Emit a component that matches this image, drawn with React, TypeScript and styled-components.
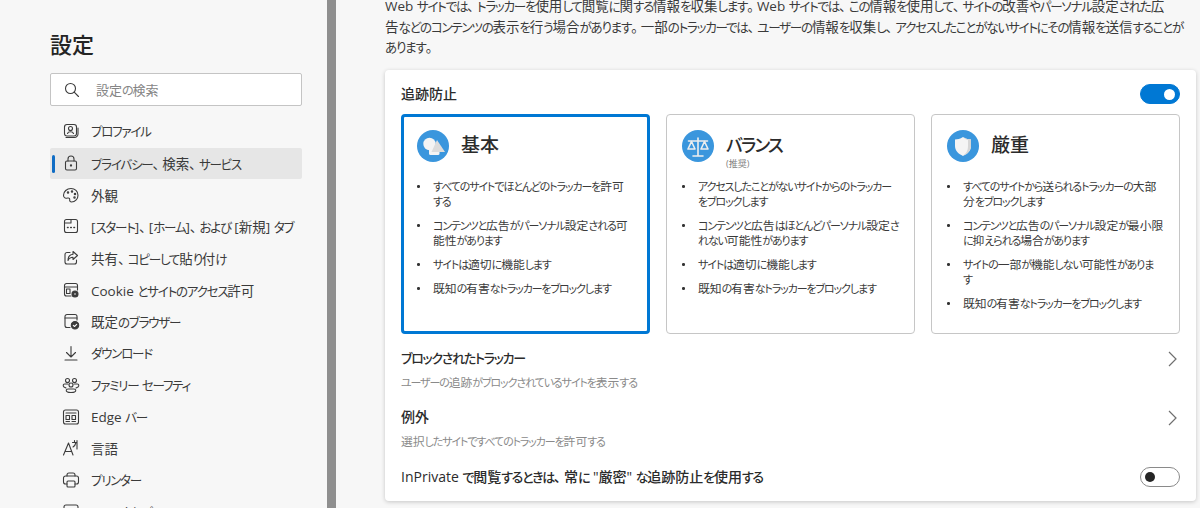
import React from "react";
import styled, { createGlobalStyle } from "styled-components";

const Global = createGlobalStyle`
  html, body { margin: 0; padding: 0; background: #f7f7f7; }
  body {
    font-family: "Open Sans", "Noto Sans CJK JP", sans-serif;
    font-feature-settings: "palt";
    color: #2b2b2b;
  }
`;

const Kana = styled.span`
  font-size: 0.93em;
  letter-spacing: -0.1em;
  line-height: 1;
`;
const Punct = styled.span`
  padding-right: 0.22em;
  line-height: 1;
`;

function T({ children }: { children: string }) {
  const parts = children.split(/([ぁ-んァ-ヶー]+|[、。])/);
  return (
    <>
      {parts.map((p, i) =>
        i % 2 === 0 ? (
          p
        ) : /[、。]/.test(p) ? (
          <Punct key={i}>{p}</Punct>
        ) : (
          <Kana key={i}>{p}</Kana>
        )
      )}
    </>
  );
}

const Page = styled.div`
  display: flex;
  width: 1200px;
  height: 508px;
  overflow: hidden;
  background: #f7f7f7;
`;
const Sidebar = styled.aside`
  width: 327px;
  flex: none;
  box-sizing: border-box;
  padding: 30px 25px 0 50px;
`;
const Title = styled.h1`
  margin: 0 0 14px;
  font-size: 22px;
  line-height: 29px;
  font-weight: 500;
  color: #242424;
`;
const Search = styled.div`
  display: flex;
  align-items: center;
  height: 33px;
  box-sizing: border-box;
  background: #fff;
  border: 1px solid #c4c4c4;
  border-radius: 2px;
  padding-left: 12px;
  gap: 15px;
  margin-bottom: 10px;
`;
const Placeholder = styled.span`
  font-size: 13px;
  color: #858585;
`;
const NavList = styled.nav`
  display: flex;
  flex-direction: column;
`;
const NavItem = styled.div<{ $active?: boolean }>`
  position: relative;
  display: flex;
  align-items: center;
  height: 31.7px;
  flex: none;
  box-sizing: border-box;
  gap: 11px;
  padding: 0 0 1px 12px;
  border-radius: 2px;
  font-size: 13.5px;
  color: #3a3a3a;
  white-space: pre;
  background: ${(p) => (p.$active ? "#e6e6e6" : "transparent")};
  ${(p) =>
    p.$active &&
    `&::before { content: ""; position: absolute; left: 2px; top: 7px; width: 3px; height: 18px; border-radius: 2px; background: #0f6cc4; }`}
`;
const NavLabel = styled.span``;
const NavIcon = styled.svg`
  width: 18px;
  height: 18px;
  flex: none;
  fill: none;
  stroke: #3c3c3c;
  stroke-width: 1.1;
  stroke-linecap: round;
  stroke-linejoin: round;
`;
const Scrollbar = styled.div`
  width: 9px;
  flex: none;
  background: #8f8f8f;
`;
const Main = styled.main`
  flex: 1;
  min-width: 0;
  padding-left: 49px;
  padding-right: 4px;
`;
const Intro = styled.p`
  margin: -4px 0 12.5px;
  font-size: 13.5px;
  line-height: 20.5px;
  color: #3a3a3a;
  white-space: nowrap;
`;
const Panel = styled.section`
  background: #fff;
  border-radius: 4px;
  box-shadow: 0 1px 4px rgba(0, 0, 0, 0.2);
  padding: 14px 16px 0;
  height: 431px;
  box-sizing: border-box;
`;
const HeaderRow = styled.div`
  display: flex;
  align-items: center;
  justify-content: space-between;
  height: 20px;
  margin-bottom: 10px;
`;
const RowLabel = styled.span`
  font-size: 14px;
  font-weight: 500;
  color: #2b2b2b;
  padding-bottom: 2px;
`;
const Toggle = styled.div<{ $on?: boolean }>`
  display: flex;
  align-items: center;
  justify-content: ${(p) => (p.$on ? "flex-end" : "flex-start")};
  width: 40px;
  height: 20px;
  box-sizing: border-box;
  border-radius: 10px;
  padding: 0 4px;
  background: ${(p) => (p.$on ? "#0078d4" : "#fff")};
  border: 1px solid ${(p) => (p.$on ? "#0078d4" : "#8a8a8a")};
  &::after {
    content: "";
    width: ${(p) => (p.$on ? "11px" : "10px")};
    height: ${(p) => (p.$on ? "11px" : "10px")};
    border-radius: 50%;
    background: ${(p) => (p.$on ? "#fff" : "#252525")};
  }
`;
const Cards = styled.div`
  display: grid;
  grid-template-columns: repeat(3, 249px);
  gap: 16px;
  margin-bottom: 15px;
`;
const Card = styled.article<{ $selected?: boolean }>`
  height: 220px;
  box-sizing: border-box;
  border-radius: 4px;
  background: #fff;
  border: ${(p) => (p.$selected ? "3px solid #0078d4" : "1px solid #c6c6c6")};
  padding: ${(p) => (p.$selected ? "13px" : "15px")};
`;
const CardHead = styled.div`
  display: flex;
  gap: 12px;
  height: 44px;
  margin-bottom: 5px;
`;
const CardIcon = styled.svg`
  width: 32px;
  height: 32px;
  flex: none;
`;
const CardTitleBox = styled.div`
  display: flex;
  flex-direction: column;
  justify-content: flex-start;
`;
const CardTitle = styled.div`
  font-size: 19px;
  line-height: 30px;
  font-weight: 500;
  color: #2b2b2b;
`;
const CardNote = styled.div`
  font-size: 9px;
  line-height: 10px;
  color: #808080;
  margin-top: -1px;
`;
const Bullets = styled.ul`
  list-style: none;
  margin: 0;
  padding: 0;
  display: flex;
  flex-direction: column;
  gap: 9px;
`;
const Bullet = styled.li`
  position: relative;
  padding-left: 16px;
  font-size: 11.8px;
  line-height: 15px;
  color: #3a3a3a;
  white-space: nowrap;
  &::before {
    content: "";
    position: absolute;
    left: 0;
    top: 6px;
    width: 2.5px;
    height: 2.5px;
    border-radius: 50%;
    background: #333;
  }
`;
const LinkRow = styled.div`
  display: flex;
  align-items: flex-start;
  justify-content: space-between;
  height: 59px;
`;
const LinkText = styled.div`
  display: flex;
  flex-direction: column;
  gap: 6px;
`;
const LinkTitle = styled.div`
  font-size: 14px;
  line-height: 18px;
  font-weight: 500;
  color: #2b2b2b;
`;
const LinkSub = styled.div`
  font-size: 11.8px;
  line-height: 18px;
  color: #8a8a8a;
`;
const Chevron = styled.svg`
  width: 16px;
  height: 16px;
  flex: none;
  margin-top: 2px;
  fill: none;
  stroke: #6f6f6f;
  stroke-width: 1.2;
`;
const ToggleRow = styled.div`
  display: flex;
  align-items: center;
  justify-content: space-between;
  height: 20px;
`;

const navItems: { label: string; icon: React.ReactNode; active?: boolean }[] = [
  { label: "プロファイル", icon: <><rect x="2.5" y="2.5" width="12" height="11.5" rx="2.5" /><path d="M4 15.5h8.500a3.500 3.500 0 0 0 3.500-3.500V6" /><path d="M5.500 11.500c.4-1.200 1.500-1.800 3-1.800s2.600.6 3 1.800" /><circle cx="8.500" cy="6.500" r="2" /></> },
  { label: "プライバシー、検索、サービス", active: true, icon: <><rect x="3.500" y="7" width="11" height="9" rx="1.500" /><path d="M6 7V5a3 3 0 0 1 6 0v2" /><circle cx="9" cy="11.500" r=".6" /></> },
  { label: "外観", icon: <><path d="M9 2.500C4.800 2.500 1.500 5.500 1.500 9.300c0 3.500 2.800 3 4.200 2.700 1.500-.3 2.300.6 2 2-.2 1.300.6 2 1.800 2 3.800 0 6.500-3.200 6.500-6.800 0-3.800-3-6.700-7-6.700z" /><circle cx="6" cy="6.500" r=".7" /><circle cx="10" cy="5.500" r=".7" /><circle cx="13" cy="8" r=".7" /><circle cx="12.500" cy="11.500" r=".7" /></> },
  { label: "[スタート]、[ホーム]、および [新規] タブ", icon: <><rect x="2.500" y="2.500" width="13" height="13" rx="2" /><path d="M2.500 6H9V2.500" /><path d="M5.500 10.500h.6M8.700 10.500h.6M11.900 10.500h.6" strokeWidth="1.500" /></> },
  { label: "共有、コピーして貼り付け", icon: <><path d="M8 3.500H5a2 2 0 0 0-2 2V13a2 2 0 0 0 2 2h7.500a2 2 0 0 0 2-2v-2" /><path d="M11 2.500l4.500 4-4.500 4V8.300C8.500 8.300 7 9.300 6 11.500c0-3.500 1.800-6 5-6.300z" /></> },
  { label: "Cookie とサイトのアクセス許可", icon: <><path d="M9 15H4.500a2 2 0 0 1-2-2V4.500a2 2 0 0 1 2-2h9a2 2 0 0 1 2 2V9" /><path d="M2.500 6h13" /><rect x="4.500" y="8" width="3.500" height="4.500" /><circle cx="13" cy="13" r="3" fill="#3c3c3c" /><circle cx="13" cy="13" r=".8" fill="#f7f7f7" stroke="none" /></> },
  { label: "既定のブラウザー", icon: <><path d="M8 15.500H5a2 2 0 0 1-2-2V4.500a2 2 0 0 1 2-2h8a2 2 0 0 1 2 2V8" /><path d="M3 6h12" /><circle cx="13" cy="13.300" r="3.700" fill="#3c3c3c" /><path d="M11.300 13.300l1.200 1.200 2.200-2.200" stroke="#f7f7f7" /></> },
  { label: "ダウンロード", icon: <><path d="M9 2.500v10M4.500 8.500L9 13l4.500-4.500M3 16h12" /></> },
  { label: "ファミリー セーフティ", icon: <><circle cx="5.500" cy="4.500" r="2" /><circle cx="12.500" cy="4.500" r="2" /><circle cx="9" cy="9" r="2" /><path d="M5.500 16c-2-1-1.500-3 .5-3h6c2 0 2.500 2 .5 3-1 .6-6 .6-7 0z" /><path d="M6 8H2.500C1 8 .8 10 2 11l2 1M12 8h3.500c1.500 0 1.700 2 .5 3l-2 1" /></> },
  { label: "Edge バー", icon: <><rect x="1.500" y="2" width="15" height="14" rx="2" /><path d="M4 5h10" /><rect x="4" y="7.500" width="3.500" height="4" /><rect x="10" y="7.500" width="3.500" height="4" /><path d="M4 13.500h3.500M10 13.500h3.500" /></> },
  { label: "言語", icon: <><path d="M1.500 16L6.500 4l4.500 12M3.200 12.500h6.500" /><path d="M10.500 3.500h4M12.500 1.500v1.500M14 3.500c-.5 2-1.500 3.500-3 4.500M15 1.500v8.500" /></> },
  { label: "プリンター", icon: <><path d="M5 5V4a2 2 0 0 1 2-2h4a2 2 0 0 1 2 2v1" /><path d="M5 13H3.500a2 2 0 0 1-2-2V7a2 2 0 0 1 2-2h11a2 2 0 0 1 2 2v4a2 2 0 0 1-2 2H13" /><rect x="5" y="10" width="8" height="6" rx="1" /></> },
  { label: "システムとパフォーマンス", icon: <><rect x="2" y="2" width="14" height="14" rx="2" /></> },
];

const basicIcon = (
  <>
    <circle cx="16" cy="16" r="16" fill="#3a96dd" />
    <circle cx="12.500" cy="14" r="6.200" fill="#f4f4f4" />
    <rect x="12" y="18" width="10.500" height="7" rx="1.500" fill="#f4f4f4" />
    <path d="M20 10l8 12H14.500z" fill="#dcdcdc" />
  </>
);
const balancedIcon = (
  <>
    <circle cx="16" cy="16" r="16" fill="#3a96dd" />
    <g fill="none" stroke="#eeeeee" strokeWidth="1.600" strokeLinejoin="round" strokeLinecap="round">
      <path d="M16 8v17M11 26h10M6.500 11h19" />
      <path d="M9.500 11.500l-3.500 7.500h7zM22.500 11.500l-3.500 7.500h7z" />
    </g>
  </>
);
const strictIcon = (
  <>
    <circle cx="16" cy="16" r="16" fill="#3a96dd" />
    <path d="M16 7c3 1.800 5.500 2.500 8 2.500V16c0 5-3.500 7.700-8 10-4.500-2.300-8-5-8-10V9.500c2.500 0 5-.7 8-2.500z" fill="#f4f4f4" />
    <path d="M16 7c3 1.800 5.500 2.500 8 2.500V16c0 5-3.500 7.700-8 10 3-2.500 5-5 5-10V10c-2-.5-3.500-1.500-5-3z" fill="#d6d6d6" />
  </>
);

const cards = [
  {
    title: "基本",
    icon: basicIcon,
    selected: true,
    bullets: [
      ["すべてのサイトでほとんどのトラッカーを許可", "する"],
      ["コンテンツと広告がパーソナル設定される可", "能性があります"],
      ["サイトは適切に機能します"],
      ["既知の有害なトラッカーをブロックします"],
    ],
  },
  {
    title: "バランス",
    note: "(推奨)",
    icon: balancedIcon,
    bullets: [
      ["アクセスしたことがないサイトからのトラッカー", "をブロックします"],
      ["コンテンツと広告はほとんどパーソナル設定さ", "れない可能性があります"],
      ["サイトは適切に機能します"],
      ["既知の有害なトラッカーをブロックします"],
    ],
  },
  {
    title: "厳重",
    icon: strictIcon,
    bullets: [
      ["すべてのサイトから送られるトラッカーの大部", "分をブロックします"],
      ["コンテンツと広告のパーソナル設定が最小限", "に抑えられる場合があります"],
      ["サイトの一部が機能しない可能性がありま", "す"],
      ["既知の有害なトラッカーをブロックします"],
    ],
  },
];

const ChevronIcon = () => (
  <Chevron viewBox="0 0 16 16">
    <path d="M5 1l7 7-7 7" />
  </Chevron>
);

const introLines = [
  "Web サイトでは、トラッカーを使用して閲覧に関する情報を収集します。Web サイトでは、この情報を使用して、サイトの改善やパーソナル設定された広",
  "告などのコンテンツの表示を行う場合があります。一部のトラッカーでは、ユーザーの情報を収集し、アクセスしたことがないサイトにその情報を送信することが",
  "あります。",
];

export default function App() {
  return (
    <Page>
      <Global />
      <Sidebar>
        <Title>設定</Title>
        <Search>
          <NavIcon viewBox="0 0 18 18">
            <circle cx="7.500" cy="7.500" r="5" />
            <path d="M11.200 11.200L15.500 15.500" />
          </NavIcon>
          <Placeholder>
            <T>設定の検索</T>
          </Placeholder>
        </Search>
        <NavList>
          {navItems.map((n) => (
            <NavItem key={n.label} $active={n.active}>
              <NavIcon viewBox="0 0 18 18">{n.icon}</NavIcon>
              <NavLabel>
                <T>{n.label}</T>
              </NavLabel>
            </NavItem>
          ))}
        </NavList>
      </Sidebar>
      <Scrollbar />
      <Main>
        <Intro>
          {introLines.map((l, i) => (
            <React.Fragment key={i}>
              {i > 0 && <br />}
              <T>{l}</T>
            </React.Fragment>
          ))}
        </Intro>
        <Panel>
          <HeaderRow>
            <RowLabel>追跡防止</RowLabel>
            <Toggle $on />
          </HeaderRow>
          <Cards>
            {cards.map((c) => (
              <Card key={c.title} $selected={c.selected}>
                <CardHead>
                  <CardIcon viewBox="0 0 32 32">{c.icon}</CardIcon>
                  <CardTitleBox>
                    <CardTitle>
                      <T>{c.title}</T>
                    </CardTitle>
                    {c.note && <CardNote>{c.note}</CardNote>}
                  </CardTitleBox>
                </CardHead>
                <Bullets>
                  {c.bullets.map((b) => (
                    <Bullet key={b[0]}>
                      <T>{b[0]}</T>
                      {b[1] && (
                        <>
                          <br />
                          <T>{b[1]}</T>
                        </>
                      )}
                    </Bullet>
                  ))}
                </Bullets>
              </Card>
            ))}
          </Cards>
          <LinkRow>
            <LinkText>
              <LinkTitle>
                <T>ブロックされたトラッカー</T>
              </LinkTitle>
              <LinkSub>
                <T>ユーザーの追跡がブロックされているサイトを表示する</T>
              </LinkSub>
            </LinkText>
            <ChevronIcon />
          </LinkRow>
          <LinkRow>
            <LinkText>
              <LinkTitle>例外</LinkTitle>
              <LinkSub>
                <T>選択したサイトですべてのトラッカーを許可する</T>
              </LinkSub>
            </LinkText>
            <ChevronIcon />
          </LinkRow>
          <ToggleRow>
            <RowLabel>
              <T>{'InPrivate で閲覧するときは、常に "厳密" な追跡防止を使用する'}</T>
            </RowLabel>
            <Toggle />
          </ToggleRow>
        </Panel>
      </Main>
    </Page>
  );
}
